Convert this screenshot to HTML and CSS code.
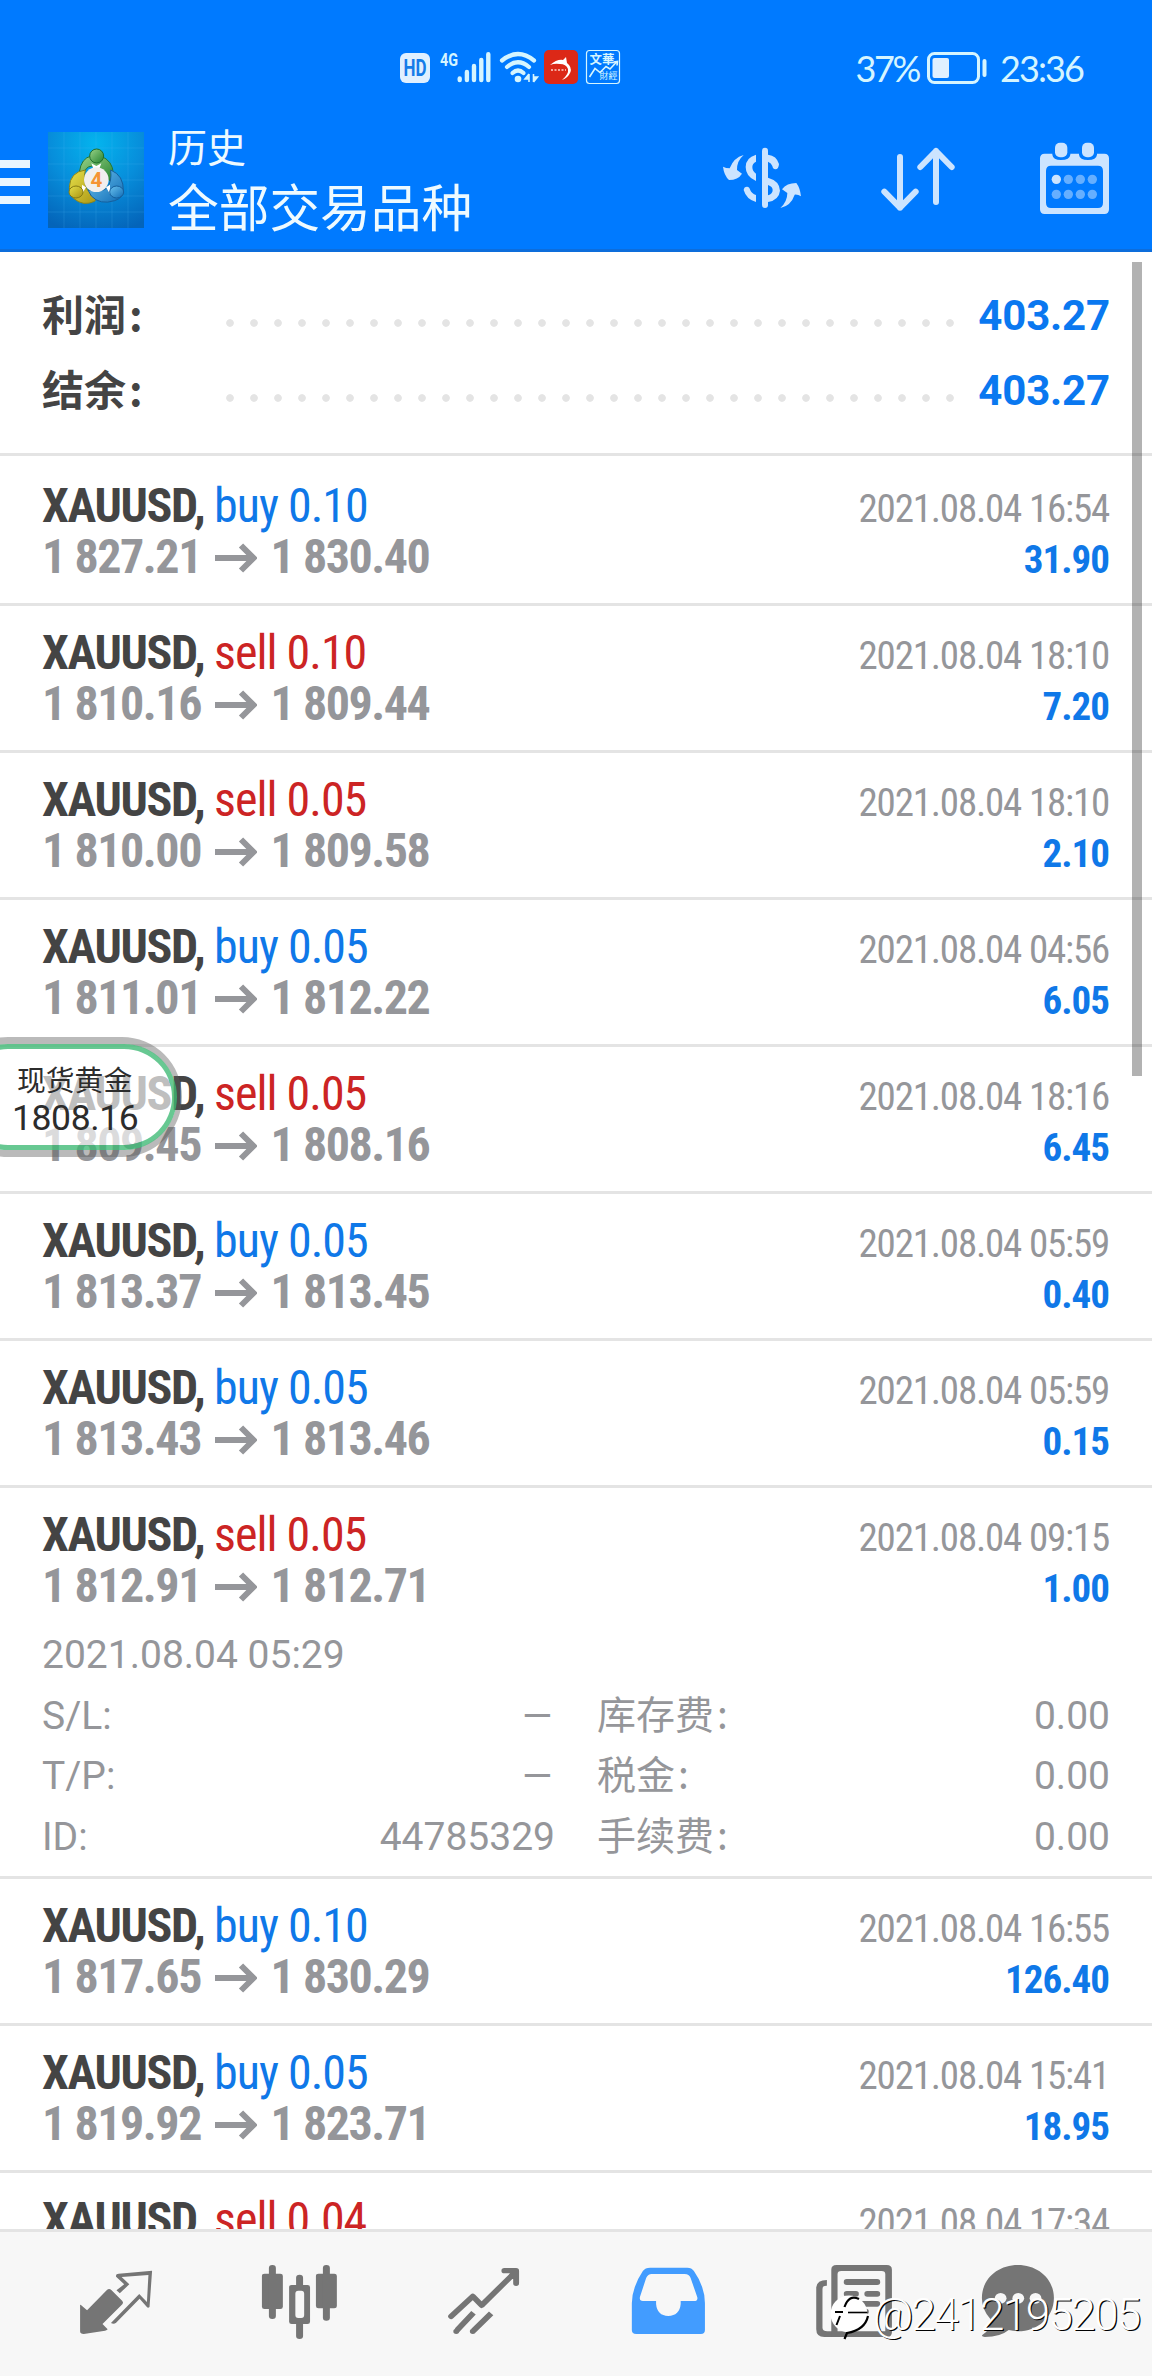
FILE: index.html
```html
<!DOCTYPE html>
<html lang="zh-CN">
<head>
<meta charset="utf-8">
<title>历史</title>
<link rel="stylesheet" href="styles.css">
</head>
<body>
<div class="screen">
  <header class="header">
    <div class="status">
      <svg class="status-icons" viewBox="0 0 380 80" width="380" height="80">
        <rect x="20" y="23" width="30" height="30" rx="6" fill="#e0f0ff"/>
        <text x="35" y="46" class="hd" text-anchor="middle" textLength="23" lengthAdjust="spacingAndGlyphs">HD</text>
        <text x="60" y="35.500" class="net" textLength="18" lengthAdjust="spacingAndGlyphs">4G</text>
        <g stroke="#d5f5ff" stroke-width="4.400" stroke-linecap="round">
          <path d="M79.700 48.500v1.500M86.900 42v8M94 36v14M101.300 30v20M108.300 24.200v25.800"/>
        </g>
        <g fill="none" stroke="#d5f5ff" stroke-width="4.200" stroke-linecap="round">
          <path d="M122 30.500Q138 17.500 154 30.500"/>
          <path d="M127 37Q138 27.500 149 37"/>
          <path d="M132.500 43Q138 38 143.500 43"/>
        </g>
        <circle cx="138" cy="49" r="3.300" fill="#d5f5ff"/>
        <path d="M149 44v8M149 44l-4 5h4M153.500 52v-8M153.500 52l4-5h-4" fill="#d5f5ff" stroke="#d5f5ff" stroke-width="1.600"/>
        <rect x="164" y="20" width="34" height="34" rx="5" fill="#dc2817"/>
        <path d="M170 35Q177 29 183 30L186 27L187 33Q192 37 190.500 42Q188 48 182 50Q189 44 188 39Q186 34 180 34Q175 33 170 35Z" fill="#fff"/>
        <path d="M171 40h15" stroke="#f4a79e" stroke-width="2" stroke-dasharray="2 1.500"/>
        <rect x="206.500" y="20.500" width="33" height="33" rx="3" fill="none" stroke="#d5f5ff" stroke-width="1.200"/>
        <text x="209.500" y="33.500" class="wh" textLength="25">文華</text>
        <text x="219.500" y="49" class="wh2" textLength="18">財經</text>
        <path d="M209.500 47L215 38.500L220 42.500L226 36.500L230 39L237 31.500M233.500 32L237.500 31.500L237 35.500" fill="none" stroke="#d5f5ff" stroke-width="1.600"/>
      </svg>
      <div class="status-right">
        <span class="pct">37%</span>
        <svg class="battery" viewBox="0 0 60 32" width="60" height="32">
          <rect x="1.500" y="1.500" width="50" height="29" rx="6" fill="none" stroke="#d5f5ff" stroke-width="3"/>
          <rect x="5.500" y="6" width="16.500" height="20" rx="2" fill="#e0f0ff"/>
          <rect x="55.500" y="7" width="4" height="18" rx="2" fill="#d5f5ff"/>
        </svg>
        <span class="clock">23:36</span>
      </div>
    </div>
    <div class="toolbar">
      <div class="menu"><i></i><i></i><i></i></div>
      <svg class="logo" viewBox="144 66 288 288" width="96" height="96">
        <defs>
          <radialGradient id="bg" cx=".5" cy=".12" r=".95"><stop offset="0" stop-color="#04b4ee"/><stop offset=".5" stop-color="#078edb"/><stop offset="1" stop-color="#0464b9"/></radialGradient>
          <linearGradient id="gr" x2="1" y2="1"><stop offset="0" stop-color="#9bd48a"/><stop offset="1" stop-color="#24822f"/></linearGradient>
          <linearGradient id="ye" x2="1" y2="1"><stop offset="0" stop-color="#e6e04a"/><stop offset="1" stop-color="#a99312"/></linearGradient>
          <linearGradient id="bl" x2="1" y2="1"><stop offset="0" stop-color="#6cc3ef"/><stop offset="1" stop-color="#0f6bb5"/></linearGradient>
        </defs>
        <rect x="144" y="66" width="288" height="288" fill="url(#bg)"/>
        <path d="M192 66v288M240 66v288M288 66v288M336 66v288M384 66v288M144 114h288M144 162h288M144 210h288M144 258h288M144 306h288" stroke="#54b9f0" stroke-opacity=".3" stroke-width="2"/>
        <path d="M238 186Q244 144 274 138H302Q338 152 340 190Q340 204 332 214L312 196Q300 170 286 170Q262 164 254 184Z" fill="url(#gr)" stroke="#257534" stroke-width="3"/>
        <path d="M256 180Q210 186 208 232Q206 252 222 266Q250 290 284 274L296 252L262 240Q248 214 256 180Z" fill="url(#ye)" stroke="#8c8418" stroke-width="3"/>
        <path d="M332 180Q372 196 370 244Q368 264 344 272Q300 286 274 258L264 240Q310 248 322 232Q336 214 332 180Z" fill="url(#bl)" stroke="#155f9d" stroke-width="3"/>
        <path d="M274 160l15 8 15-8-6 16h-18zM246 224l12 8-12 20zM330 224l-12 8 12 20z" fill="#fff"/>
        <circle cx="290" cy="138" r="21" fill="url(#gr)" stroke="#1e6d2b" stroke-width="3"/>
        <ellipse cx="228" cy="246" rx="21" ry="18" fill="url(#ye)" stroke="#857a12" stroke-width="3"/>
        <ellipse cx="350" cy="246" rx="21" ry="18" fill="url(#bl)" stroke="#155f9d" stroke-width="3"/>
        <circle cx="289" cy="209" r="37" fill="#f1efee"/>
        <text x="289" y="231" class="four" text-anchor="middle">4</text>
      </svg>
      <div class="titles"><div class="t1">历史</div><div class="t2">全部交易品种</div></div>
      <div class="actions">
        <svg viewBox="36 66 288 288" width="96" height="96" fill="#cce4ff">
          <rect x="186" y="113" width="18" height="181" rx="9"/>
          <path d="M168 134V155Q157 160 157 171Q157 183 168 191V213Q137 200 137 171Q137 143 168 134Z"/>
          <path d="M204 134Q230 137 237 162Q236 178 226 178Q219 178 217 168Q214 159 204 155Z"/>
          <path d="M204 203Q239 213 240 242Q237 270 204 276V256Q218 252 218 240Q218 230 204 225Z"/>
          <path d="M168 276Q139 268 131 240Q132 230 141 230Q149 231 151 241Q155 251 168 255Z"/>
          <path d="M131 135Q110 153 111 180L126 191Q114 210 87 210Q72 196 69 170Q78 175 89 175Q101 143 131 135Z"/>
          <path d="M241 294Q262 275 262 249L246 238Q260 219 289 219Q300 233 303 259Q294 253 284 254Q273 287 241 294Z"/>
        </svg>
        <svg viewBox="510 66 288 288" width="96" height="96" fill="none" stroke="#cce4ff" stroke-width="18" stroke-linecap="round" stroke-linejoin="round">
          <path d="M600 141V293M553 245L600 293L647 245M708 276V123M661 171L708 123L755 171"/>
        </svg>
        <svg viewBox="978 66 288 288" width="96" height="96">
          <path fill="#cce4ff" fill-rule="evenodd" d="M1034 131H1057V134Q1059 150 1083 150Q1109 150 1111 134V131H1137V134Q1139 150 1164 150Q1189 150 1191 134V131H1213Q1227 131 1227 145V298Q1227 312 1213 312H1034Q1020 312 1020 298V145Q1020 131 1034 131ZM1053 167Q1038 167 1038 183V278Q1038 294 1053 294H1194Q1209 294 1209 278V183Q1209 167 1194 167Z"/>
          <rect x="1065" y="98" width="37" height="44" rx="15" fill="#cce4ff"/><rect x="1146" y="98" width="36" height="44" rx="15" fill="#cce4ff"/>
          <circle cx="1069" cy="208" r="14" fill="#cce4ff"/>
          <g fill="#66afff"><circle cx="1105" cy="208" r="14"/><circle cx="1141" cy="208" r="14"/><circle cx="1177" cy="208" r="14"/><circle cx="1069" cy="253" r="14"/><circle cx="1105" cy="253" r="14"/><circle cx="1141" cy="253" r="14"/><circle cx="1177" cy="253" r="14"/></g>
        </svg>
      </div>
    </div>
  </header>

  <main class="content">
    <section class="summary">
      <div class="sum"><span class="sum-label">利润<b class="colon">:</b></span><span class="dots"></span><span class="sum-val">403.27</span></div>
      <div class="sum"><span class="sum-label">结余<b class="colon">:</b></span><span class="dots"></span><span class="sum-val">403.27</span></div>
    </section>
    <svg width="0" height="0" class="defs"><symbol id="arrow" viewBox="0 0 42 30"><path d="M0 15H38M26 2.500L38.500 15L26 27.500" fill="none" stroke="#95969a" stroke-width="6"/></symbol></svg>

    <article class="row"><div class="line"><div class="sym">XAUUSD, <span class="buy">buy 0.10</span></div><div class="date">2021.08.04 16:54</div></div>
      <div class="line"><div class="price">1 827.21<svg class="arr"><use href="#arrow"/></svg>1 830.40</div><div class="profit">31.90</div></div></article>
    <article class="row"><div class="line"><div class="sym">XAUUSD, <span class="sell">sell 0.10</span></div><div class="date">2021.08.04 18:10</div></div>
      <div class="line"><div class="price">1 810.16<svg class="arr"><use href="#arrow"/></svg>1 809.44</div><div class="profit">7.20</div></div></article>
    <article class="row"><div class="line"><div class="sym">XAUUSD, <span class="sell">sell 0.05</span></div><div class="date">2021.08.04 18:10</div></div>
      <div class="line"><div class="price">1 810.00<svg class="arr"><use href="#arrow"/></svg>1 809.58</div><div class="profit">2.10</div></div></article>
    <article class="row"><div class="line"><div class="sym">XAUUSD, <span class="buy">buy 0.05</span></div><div class="date">2021.08.04 04:56</div></div>
      <div class="line"><div class="price">1 811.01<svg class="arr"><use href="#arrow"/></svg>1 812.22</div><div class="profit">6.05</div></div></article>
    <article class="row"><div class="line"><div class="sym">XAUUSD, <span class="sell">sell 0.05</span></div><div class="date">2021.08.04 18:16</div></div>
      <div class="line"><div class="price">1 809.45<svg class="arr"><use href="#arrow"/></svg>1 808.16</div><div class="profit">6.45</div></div></article>
    <article class="row"><div class="line"><div class="sym">XAUUSD, <span class="buy">buy 0.05</span></div><div class="date">2021.08.04 05:59</div></div>
      <div class="line"><div class="price">1 813.37<svg class="arr"><use href="#arrow"/></svg>1 813.45</div><div class="profit">0.40</div></div></article>
    <article class="row"><div class="line"><div class="sym">XAUUSD, <span class="buy">buy 0.05</span></div><div class="date">2021.08.04 05:59</div></div>
      <div class="line"><div class="price">1 813.43<svg class="arr"><use href="#arrow"/></svg>1 813.46</div><div class="profit">0.15</div></div></article>
    <article class="row open"><div class="line"><div class="sym">XAUUSD, <span class="sell">sell 0.05</span></div><div class="date">2021.08.04 09:15</div></div>
      <div class="line"><div class="price">1 812.91<svg class="arr"><use href="#arrow"/></svg>1 812.71</div><div class="profit">1.00</div></div>
      <div class="details">
        <div class="opened">2021.08.04 05:29</div>
        <div class="pair"><span>S/L:</span><span class="dash">–</span></div><div class="pair"><span>库存费<b class="colon">:</b></span><span>0.00</span></div>
        <div class="pair"><span>T/P:</span><span class="dash">–</span></div><div class="pair"><span>税金<b class="colon">:</b></span><span>0.00</span></div>
        <div class="pair"><span>ID:</span><span>44785329</span></div><div class="pair"><span>手续费<b class="colon">:</b></span><span>0.00</span></div>
      </div></article>
    <article class="row"><div class="line"><div class="sym">XAUUSD, <span class="buy">buy 0.10</span></div><div class="date">2021.08.04 16:55</div></div>
      <div class="line"><div class="price">1 817.65<svg class="arr"><use href="#arrow"/></svg>1 830.29</div><div class="profit">126.40</div></div></article>
    <article class="row"><div class="line"><div class="sym">XAUUSD, <span class="buy">buy 0.05</span></div><div class="date">2021.08.04 15:41</div></div>
      <div class="line"><div class="price">1 819.92<svg class="arr"><use href="#arrow"/></svg>1 823.71</div><div class="profit">18.95</div></div></article>
    <article class="row"><div class="line"><div class="sym">XAUUSD, <span class="sell">sell 0.04</span></div><div class="date">2021.08.04 17:34</div></div></article>
    <div class="scrollbar"></div>
  </main>

  <nav class="nav">
    <svg viewBox="65.300 216 500.900 432" preserveAspectRatio="none" fill="#757575">
      <path d="M218 434Q221 434 237 451L291 390Q297 384 303 390L333 423Q337 428 333 433L279 492L293 508Q292 511 286 512L228 522Q218 522 218 514Z"/>
      <path fill-rule="evenodd" d="M414 332L407 441Q402 446 398 439L380 416L316 488Q310 494 302 489L379 402L400 426L404 345L331 351L352 373L326 400L317 391L338 373L316 350Q314 341 323 341Z"/>
    </svg>
    <svg viewBox="566.200 216 500.900 432" preserveAspectRatio="none" fill="#757575">
      <rect x="713" y="341" width="57" height="106" rx="7"/><rect x="732" y="315" width="19" height="162" rx="9"/>
      <path fill-rule="evenodd" d="M794 375H837Q844 375 844 382V485Q844 492 837 492H794Q787 492 787 485V382Q787 375 794 375ZM812 392Q804 392 804 401V465Q804 474 812 474H820Q828 474 828 465V401Q828 392 820 392Z"/>
      <path d="M806 380V353Q806 344 815.500 344Q825 344 825 353V380ZM806 488V528Q806 537 815.500 537Q825 537 825 528V488Z"/>
      <rect x="860" y="341" width="57" height="104" rx="7"/><rect x="879" y="315" width="19" height="167" rx="9"/>
    </svg>
    <svg viewBox="1067.100 216 500.900 432" preserveAspectRatio="none" fill="none" stroke="#757575" stroke-width="16" stroke-linecap="round" stroke-linejoin="round">
      <path d="M1228 469L1287 409L1311 436L1404 335M1373 332H1405V370"/><path stroke-linecap="butt" d="M1289 458L1244 511M1337 460L1289 512"/><path d="M1242 514h.1M1287 514h.1"/>
    </svg>
    <svg viewBox="0 216 500.900 432" preserveAspectRatio="none">
      <path fill="#429cff" fill-rule="evenodd" d="M202 323H303Q315 323 321 333Q351 380 351 430V510Q351 522 340 522H164Q152 522 152 510V430Q153 380 182 333Q188 323 202 323ZM206 342Q196 342 191 354L174 411Q172 423 182 423H218V432Q221 467 251 468Q282 467 285 432V423H321Q333 423 330 411L312 354Q308 342 296 342Z"/>
    </svg>
    <svg viewBox="500.900 216 500.900 432" preserveAspectRatio="none" fill="#757575">
      <path d="M683 360V377Q671 376 671 387V504Q672 514 684 514H697V531H676Q654 531 654 508V382Q656 360 683 360Z"/>
      <path fill-rule="evenodd" d="M709 315H846Q860 315 860 329V517Q860 531 846 531H695V329Q695 315 709 315ZM722 333Q712 333 712 343V514H842V343Q842 333 832 333Z"/>
      <rect x="729" y="357" width="99" height="18" rx="8"/><rect x="729" y="393" width="41" height="17" rx="8"/><rect x="785" y="393" width="43" height="17" rx="8"/><rect x="729" y="423" width="99" height="17" rx="8"/><rect x="729" y="446" width="68" height="17" rx="8"/>
    </svg>
    <svg viewBox="1001.800 216 500.900 432" preserveAspectRatio="none" fill="#757575">
      <path d="M1203 315C1258 315 1301 357 1301 414C1301 471 1257 514 1203 514Q1189 513 1178 510Q1155 531 1113 531Q1103 530 1106 525Q1131 508 1128 477Q1105 449 1105 414C1105 357 1148 315 1203 315Z"/>
      <g fill="#f7f7f7"><circle cx="1156" cy="415" r="16"/><circle cx="1204" cy="415" r="16"/><circle cx="1251" cy="415" r="16"/></g>
    </svg>
  </nav>

  <div class="bubble"><div class="bubble-in"><span class="b1">现货黄金</span><span class="b2">1808.16</span></div></div>
  <div class="watermark">
    <svg viewBox="0 0 44 48" width="44" height="48">
      <circle cx="23" cy="22" r="18.500" fill="#fff"/>
      <path d="M33 7Q23 2 18.500 15" fill="none" stroke="#000" stroke-width="2.200"/>
      <path d="M9 20H17M14 24L10.500 33" fill="none" stroke="#000" stroke-width="2"/>
      <path d="M22 20.500H41.500" fill="none" stroke="#000" stroke-width="1.600"/>
      <path d="M42 24Q39 38 21 41L18.500 47" fill="none" stroke="#000" stroke-width="2.200"/>
    </svg>
    <span>@2412195205</span>
  </div>
</div>
</body>
</html>
```
FILE: styles.css
```css
* { box-sizing: border-box; }
body { margin: 0; font-family: Roboto, "Noto Sans CJK SC", sans-serif; }
.screen { position: relative; width: 1152px; height: 2376px; overflow: hidden; background: #fff; display: flex; flex-direction: column; }

.header { height: 252px; background: #007aff; border-bottom: 3px solid #0d6ddb; flex: none; }
.status { height: 110px; padding: 30px 69px 0 380px; display: flex; justify-content: space-between; align-items: flex-start; }
.hd { font: 700 23px Roboto, sans-serif; fill: #157ce8; }
.net { font: 700 19px Roboto, sans-serif; fill: #d5f5ff; }
.wh { font: 700 12.500px "Noto Sans CJK TC", sans-serif; fill: #d5f5ff; }
.wh2 { font: 400 9px "Noto Sans CJK TC", sans-serif; fill: #d5f5ff; }
.status-right { display: flex; align-items: center; height: 76px; color: #d5f5ff; font: 400 36px/76px Lato, sans-serif; }
.pct { letter-spacing: -2.400px; }
.battery { margin: 0 13px 0 8px; }
.clock { letter-spacing: -1.900px; }

.toolbar { height: 139px; padding: 22px 30px 0 0; display: flex; align-items: flex-start; }
.menu { width: 48px; padding-top: 28px; display: flex; flex-direction: column; gap: 10px; }
.menu i { width: 30px; height: 8px; background: #e9f6ff; }
.four { font: 700 62px Roboto, sans-serif; fill: #f59434; }
.titles { margin-left: 24px; color: #eefaff; flex: 1; }
.t1 { font-size: 39px; line-height: 46px; margin-top: -6px; }
.t2 { font-size: 50.700px; line-height: 60px; margin-top: 8px; }
.actions { display: flex; gap: 60px; }
.actions svg:first-child { margin-right: 2px; }

.content { position: relative; height: 1977px; overflow: hidden; flex: none; }
.summary { height: 204px; padding-top: 26px; border-bottom: 3px solid #e4e4e4; margin-bottom: 3px; }
.sum { height: 75px; padding: 0 42px; display: flex; line-height: 75px; font-size: 42px; font-weight: 700; }
.sum-label { width: 176px; color: #444; line-height: 77px; }
.colon { font-family: "Noto Sans CJK SC", sans-serif; font-weight: inherit; margin-left: 3px; line-height: 1; }
.dots { width: 744px; height: 24px; margin-top: 33px; background: radial-gradient(circle at 12px 12px, #e4e4e4 3.400px, transparent 4.200px) 0 0 / 24px 24px; }
.sum-val { flex: 1; text-align: right; color: #0a78f0; letter-spacing: -.15px; }
.defs { position: absolute; }

.row { height: 147px; padding: 21px 42px 0; border-bottom: 3px solid #e4e4e4; font-family: "Roboto Condensed", Roboto, "Noto Sans CJK SC", sans-serif; font-stretch: 75%; }
.row.open { height: 391px; }
.line { height: 51px; display: flex; justify-content: space-between; align-items: baseline; line-height: 51px; white-space: nowrap; }
.sym { font-size: 48px; font-weight: 700; color: #444; letter-spacing: -1.350px; }
.sym span { font-weight: 400; letter-spacing: -1px; }
.buy { color: #0f78e8; }
.sell { color: #cc2424; }
.price { font-size: 48px; font-weight: 700; color: #95969a; letter-spacing: -1.450px; }
.arr { width: 42px; height: 30px; margin: 0 13px 0 14.500px; vertical-align: 0; }
.date { font-size: 39px; color: #95969a; letter-spacing: -1.200px; margin-right: 1px; }
.profit { font-size: 39px; font-weight: 700; color: #0f78e8; letter-spacing: -1px; margin-right: 1px; }
.details { margin-top: 14px; display: grid; grid-template-columns: 513px 1fr; column-gap: 42px; grid-auto-rows: 60.700px; line-height: 60.700px; font-family: Roboto, "Noto Sans CJK SC", sans-serif; font-stretch: 100%; font-size: 39px; color: #95969a; }
.opened { grid-column: 1 / 3; }
.pair { display: flex; justify-content: space-between; }
.dash { transform: scaleX(1.32); transform-origin: right; }

.scrollbar { position: absolute; left: 1132px; top: 10px; width: 10px; height: 814px; background: rgba(0,0,0,.3); }

.nav { height: 147px; padding: 0 24px; background: #f7f7f7; border-top: 3px solid #e4e4e4; display: flex; flex: none; }
.nav svg { width: 184px; height: 144px; }

.bubble { position: absolute; left: -52px; top: 1037px; width: 234px; height: 120px; border: 7px solid rgba(90,90,90,.42); border-right-width: 5px; border-radius: 60px; }
.bubble-in { height: 106px; border: 5px solid rgba(60,185,115,.78); border-radius: 53px; background: rgba(255,255,255,.66); background-clip: padding-box; display: flex; flex-direction: column; padding: 14px 0 0 57px; color: #2c2c2c; white-space: nowrap; }
.b1 { font-size: 28.800px; line-height: 36px; }
.b2 { font-size: 35.500px; line-height: 38px; margin-left: -5px; letter-spacing: -.4px; }

.watermark { position: absolute; left: 826px; top: 2292px; display: flex; color: #fff; }
.watermark span { font: 300 44px/46px Roboto, sans-serif; letter-spacing: -1.600px; text-shadow: 1.200px 1.200px 0 #000; margin-left: 3px; }
```
